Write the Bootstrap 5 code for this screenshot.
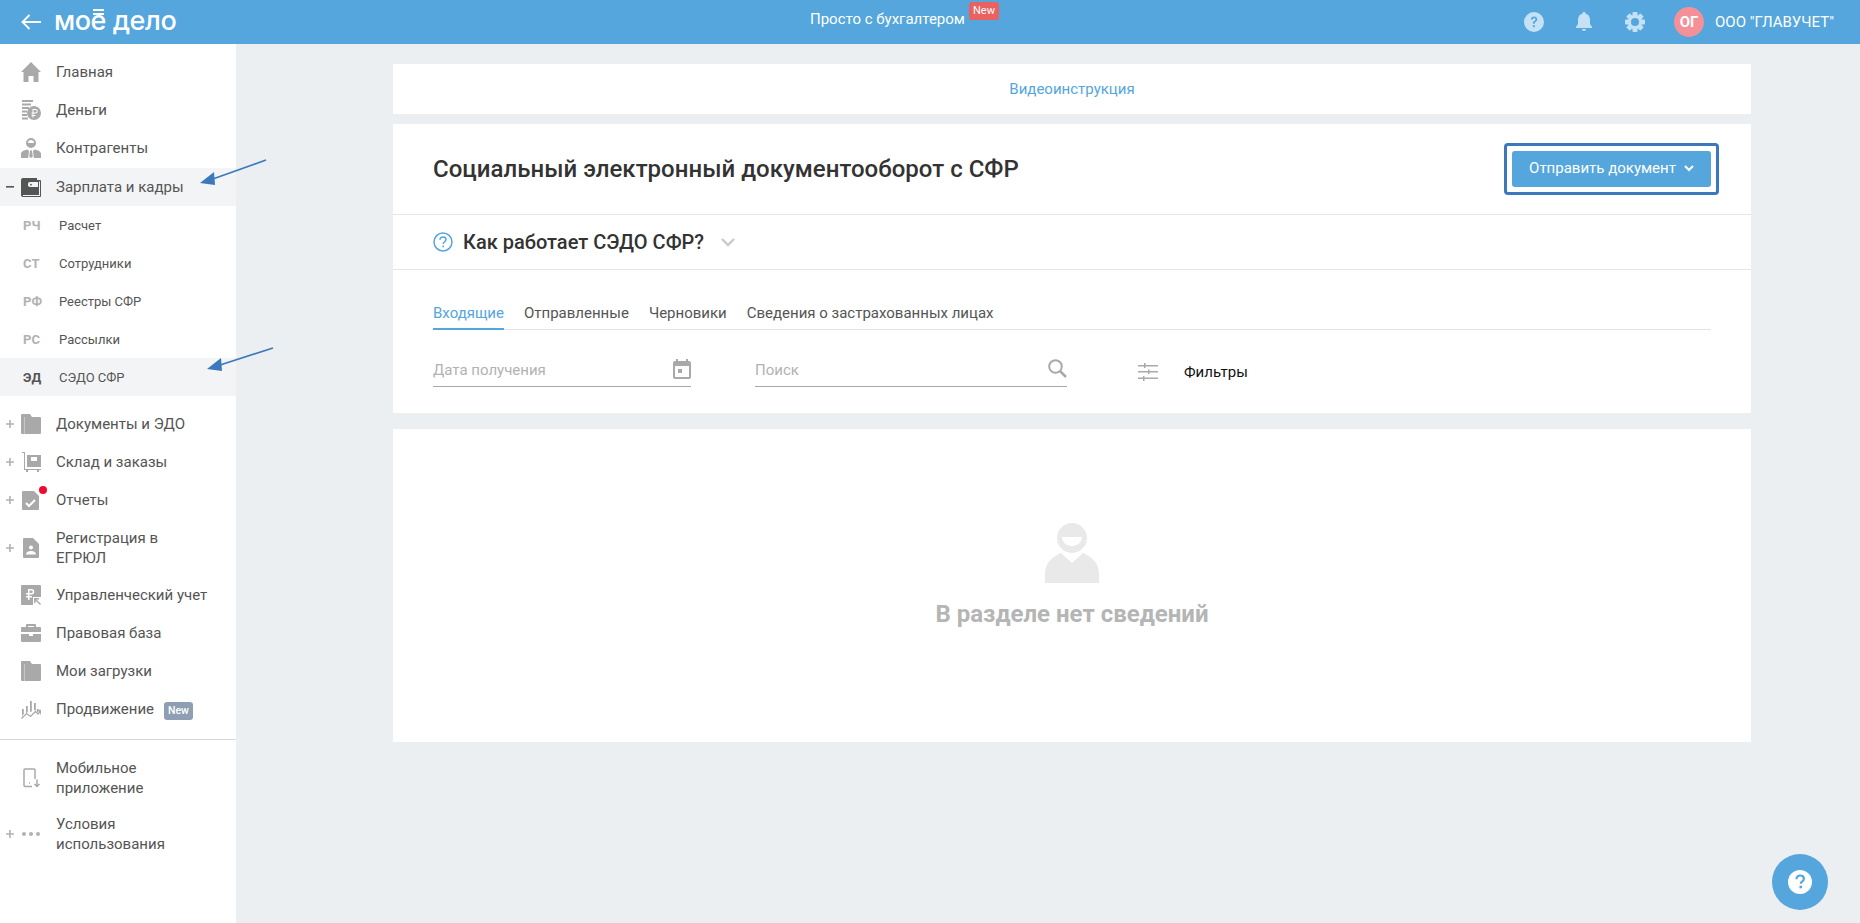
<!DOCTYPE html>
<html lang="ru">
<head>
<meta charset="utf-8">
<title>Моё дело</title>
<link href="https://cdn.jsdelivr.net/npm/bootstrap@5.3.0/dist/css/bootstrap.min.css" rel="stylesheet">
<style>
html,body{height:100%;overflow:hidden}
body{font-family:Roboto,"Liberation Sans",sans-serif;background:#ebeff2;color:#333;font-size:15px;position:relative}
.topbar{height:44px;background:#54a6dd;color:#fff}
.logo-word{font-family:Inter,Roboto,sans-serif;font-size:27px;font-weight:500;letter-spacing:-.45px;line-height:44px;margin-left:13px;position:relative;top:-1px}
.logo-e{position:relative}
.logo-e::before{content:"";position:absolute;left:2px;right:2px;top:5px;height:6px;border-top:2px solid #fff;border-bottom:2px solid #fff}
.back-ico{margin-left:21px}
.top-center{position:absolute;left:810px;top:0;height:44px;line-height:38px;font-size:15px}
.new-red{position:absolute;left:159px;top:2px;background:#ea6161;color:#fff;font-size:11px;line-height:18px;border-radius:3px;width:30px;text-align:center;height:18px}
.top-right{margin-left:auto}
.ico-slot{width:20px;height:20px;display:block}
.avatar-o{width:30px;height:30px;border-radius:50%;background:#f49097;color:#fff;font-weight:700;font-size:15px;display:flex;align-items:center;justify-content:center}
.company{font-size:15px;margin-left:11px;margin-right:26px}
.shell{height:879px}
.side-nav{width:236px;background:#fff;flex:none;padding-top:9px;font-size:15px;color:#555}
.mitem{min-height:38px;display:flex;align-items:center;padding-left:21px;line-height:20px;position:relative}
.mitem.pad-end{min-height:39px;padding-bottom:1px}
.mitem.active-row{background:#f3f4f5}
.mitem .ic{width:20px;height:20px;flex:none;margin-right:15px;display:block}
.mitem .tx{white-space:nowrap}
.mitem.two{min-height:57px}
.toggle{position:absolute;left:6px;top:50%;margin-top:-4px;width:8px;height:8px;display:block}
.sub-row{height:38px;display:flex;align-items:center;font-size:13px;color:#555;padding-top:1px}
.sub-row.active-row{background:#f3f4f5}
.abbr{width:59px;padding-left:23px;font-weight:700;font-size:13px;color:#b2b2b2;letter-spacing:.2px;flex:none}
.active-row .abbr{color:#555}
.sub-wrap{margin-bottom:9px}
.new-grey{background:#8e9fb4;color:#fff;font-size:10.5px;font-weight:500;border-radius:3px;line-height:18px;height:18px;padding:0 4px;margin-left:10px;display:inline-block}
.side-hr{border-top:1px solid #d9d9d9;margin:11px 0 0;opacity:1}
.lower{padding-top:10px}
.lower .mitem.two{min-height:56px}
.main-zone{flex:1;padding:20px 109px 0 157px;min-width:0}
.pane{background:#fff}
.video-box{height:50px;line-height:51px;text-align:center;color:#54a6dd;font-size:15px;margin-bottom:10px}
.main-box{height:289px;margin-bottom:16px}
.title-row{height:91px;padding:0 31px 0 40px;border-bottom:1px solid #e6e6e6}
.page-title{font-size:24px;font-weight:500;color:#333;margin:0;letter-spacing:.02px}
.btn-outline-frame{border:3px solid #3b78bc;border-radius:4px;padding:5px;background:#fff;margin-right:1px}
.btn-send{background:#54a6dd;color:#fff;border:0;border-radius:3px;height:36px;width:199px;font-size:15px;padding:0 0 2px;display:flex;align-items:center;justify-content:center;gap:8px}
.help-row{height:55px;padding-left:40px;border-bottom:1px solid #e6e6e6;font-size:20px;font-weight:500;color:#333}
.help-text{margin-left:10px}
.help-chev{margin-left:17px}
.tab-line{margin:30px 40px 0 40px;border-bottom:1px solid #e4e4e4;height:30px;gap:20px;font-size:15px;color:#555}
.tab-one{height:30px;line-height:27px}
.tab-on{color:#54a6dd;border-bottom:2px solid #54a6dd}
.filter-row{padding-left:40px;margin-top:25px;font-size:15px}
.fld{border-bottom:1px solid #a9a9a9;height:32px;color:#b2b2b2;display:flex;align-items:flex-start;justify-content:space-between;line-height:21px;padding-top:5px}
.fld svg{margin-top:-1px}
.fld-date{width:258px;margin-right:64px}
.fld-search{width:312px;margin-right:71px}
.filter-ico{margin-top:2px}
.filters-label{color:#111;font-size:15px;margin-left:26px;margin-top:2px}
.empty-box{height:313px;text-align:center;padding-top:94px}
.empty-txt{font-size:24px;font-weight:700;color:#b5b5b5;margin-top:16px;line-height:30px}
.fab-help{position:absolute;right:32px;bottom:13px;width:56px;height:56px;border-radius:50%;background:#54a6dd;display:flex;align-items:center;justify-content:center}
.arrow-mark{position:absolute;display:block}
</style>
</head>
<body>
<header class="topbar d-flex align-items-center position-relative">
  <svg class="back-ico" width="20" height="16" viewBox="0 0 20 16" fill="none" stroke="#fff" stroke-width="1.800"><path d="M20 8H1.500M8.500 1 1.500 8l7 7"/></svg>
  <span class="logo-word">мо<span class="logo-e">е</span> дело</span>
  <div class="top-center">Просто с бухгалтером<span class="new-red">New</span></div>
  <div class="top-right d-flex align-items-center">
    <svg class="ico-slot" style="margin-right:30px" viewBox="0 0 20 20"><circle cx="10" cy="10" r="10" fill="#c5e1f6"/><path d="M6.800 7.600C6.900 5.600 8.200 4.500 10.100 4.500c1.900 0 3.200 1.100 3.200 2.800 0 1.400-.8 2-1.700 2.700-.7.500-.9.900-.9 1.700H8.900c0-1.400.4-2 1.300-2.700.7-.6 1.200-.9 1.200-1.600 0-.7-.5-1.200-1.300-1.200-.9 0-1.400.6-1.400 1.400H6.800zM8.900 13.200h1.900v2H8.900z" fill="#54a6dd"/></svg>
    <svg class="ico-slot" style="margin-right:31px" viewBox="0 0 20 20" fill="#c5e1f6"><path d="M10 0c1 0 1.500.6 1.500 1.500C14.500 2.300 16 4.800 16 8v4l2 3v1H2v-1l2-3V8c0-3.200 1.500-5.700 4.500-6.500C8.500.6 9 0 10 0zM8 17h4c0 1.200-.9 2-2 2s-2-.8-2-2z"/></svg>
    <svg class="ico-slot" style="margin-right:29px" viewBox="0 0 20 20" fill="#c5e1f6"><rect x="7.500" y="0" width="5" height="20" rx=".8"/><rect x="7.500" y="0" width="5" height="20" rx=".8" transform="rotate(45 10 10)"/><rect x="7.500" y="0" width="5" height="20" rx=".8" transform="rotate(90 10 10)"/><rect x="7.500" y="0" width="5" height="20" rx=".8" transform="rotate(135 10 10)"/><circle cx="10" cy="10" r="5.500" fill="none" stroke="#c5e1f6" stroke-width="3"/><circle cx="10" cy="10" r="4" fill="#54a6dd"/></svg>
    <div class="avatar-o">ОГ</div>
    <span class="company">ООО "ГЛАВУЧЕТ"</span>
  </div>
</header>
<div class="shell d-flex">
  <nav class="side-nav">
    <div class="mitem"><svg class="ic" viewBox="0 0 20 20" fill="#a9a9a9"><path d="M10 0 20 10h-2.500v10h-5v-6h-5v6h-5V10H0z"/></svg><span class="tx">Главная</span></div>
    <div class="mitem"><svg class="ic" viewBox="0 0 20 20" fill="#a9a9a9"><path d="M1 0h11v2H1zM1 3.500h9v2H1zM1 7h7v2H1zM1 10.500h5v2H1zM1 14h5v2H1zM1 17.500h6v2H1z"/><circle cx="13" cy="13" r="7"/><path d="M11.500 9h3a2.200 2.200 0 0 1 0 4.500h-2V15H14.500v1h-2v1.500h-1V16h-1v-1h1v-1.500h-1v-1h1zm1 1v2.500h2a1.200 1.200 0 0 0 0-2.500z" fill="#fff"/></svg><span class="tx">Деньги</span></div>
    <div class="mitem pad-end"><svg class="ic" viewBox="0 0 20 20" fill="#a9a9a9"><path fill-rule="evenodd" d="M10 0a5 5 0 1 1 0 10 5 5 0 0 1 0-10zm0 2A3 3 0 0 0 7 5h6a3 3 0 0 0-3-3z"/><path d="M6.500 11.500 8 13l-.8 7H0v-4c0-2.500 3-3.700 6.500-4.500zM13.500 11.500 12 13l.8 7H20v-4c0-2.500-3-3.700-6.500-4.500zM9 12.500h2l.8 6-1.800 1.500-1.800-1.500z"/></svg><span class="tx">Контрагенты</span></div>
    <div class="mitem active-row"><svg class="toggle" viewBox="0 0 8 8" fill="#555"><path d="M0 3h8v1.600H0z"/></svg><svg class="ic" viewBox="0 0 20 20" fill="#555"><path fill-rule="evenodd" d="M2 1h13l1 0v2h3a1 1 0 0 1 1 1v15a1 1 0 0 1-1 1H2a2 2 0 0 1-2-2V3a2 2 0 0 1 2-2zm7 4a2 2 0 0 0-2 2v1a2 2 0 0 0 2 2h8V5zm1 1.800a.9.9 0 1 0 0 1.800.9.9 0 0 0 0-1.800zM18 4.500v13.500H2v1h17V4.500z"/></svg><span class="tx">Зарплата и кадры</span></div>
    <div class="sub-wrap">
      <div class="sub-row"><span class="abbr">РЧ</span>Расчет</div>
      <div class="sub-row"><span class="abbr">СТ</span>Сотрудники</div>
      <div class="sub-row"><span class="abbr">РФ</span>Реестры СФР</div>
      <div class="sub-row"><span class="abbr">РС</span>Рассылки</div>
      <div class="sub-row active-row"><span class="abbr">ЭД</span>СЭДО СФР</div>
    </div>
    <div class="mitem"><svg class="toggle" viewBox="0 0 8 8" fill="#b2b2b2"><path d="M3.200 0h1.600v3.200H8v1.600H4.800V8H3.200V4.800H0V3.200h3.200z"/></svg><svg class="ic" viewBox="0 0 20 20" fill="#a9a9a9"><path d="M1 0h8l2 3h8a1 1 0 0 1 1 1v15a1 1 0 0 1-1 1H1a1 1 0 0 1-1-1V1a1 1 0 0 1 1-1z"/><path d="M3 3h.7v17H3z" fill="#d5d5d5"/></svg><span class="tx">Документы и ЭДО</span></div>
    <div class="mitem"><svg class="toggle" viewBox="0 0 8 8" fill="#b2b2b2"><path d="M3.200 0h1.600v3.200H8v1.600H4.800V8H3.200V4.800H0V3.200h3.200z"/></svg><svg class="ic" viewBox="0 0 20 20" fill="#a9a9a9"><path d="M1 0h3v17h16v1h-2v2h-2v-2H7v2H5v-2H3V1H1z"/><path fill-rule="evenodd" d="M6 3h14v12H6zm4 2v4h6V5z"/></svg><span class="tx">Склад и заказы</span></div>
    <div class="mitem"><svg class="toggle" viewBox="0 0 8 8" fill="#b2b2b2"><path d="M3.200 0h1.600v3.200H8v1.600H4.800V8H3.200V4.800H0V3.200h3.200z"/></svg><svg class="ic" viewBox="0 0 20 20" fill="#a9a9a9"><path d="M2 1h11l5 5v13a1 1 0 0 1-1 1H2a1 1 0 0 1-1-1V2a1 1 0 0 1 1-1z"/><path d="m5 13 3 3 6-6" fill="none" stroke="#fff" stroke-width="2"/></svg><svg class="arrow-mark" style="left:39px;top:5px" width="8" height="8" viewBox="0 0 8 8"><circle cx="4" cy="4" r="4" fill="#ee0b2e"/></svg><span class="tx">Отчеты</span></div>
    <div class="mitem two"><svg class="toggle" viewBox="0 0 8 8" fill="#b2b2b2"><path d="M3.200 0h1.600v3.200H8v1.600H4.800V8H3.200V4.800H0V3.200h3.200z"/></svg><svg class="ic" viewBox="0 0 20 20" fill="#a9a9a9"><path d="M3 0h9l6 6v13a1 1 0 0 1-1 1H3a1 1 0 0 1-1-1V1a1 1 0 0 1 1-1z"/><circle cx="10" cy="9.500" r="2" fill="#fff"/><path d="M5 16.500c0-2.500 2.500-3.500 5-3.500s5 1 5 3.500z" fill="#fff"/></svg><span class="tx">Регистрация в<br>ЕГРЮЛ</span></div>
    <div class="mitem"><svg class="ic" viewBox="0 0 20 20" fill="#a9a9a9"><path d="M1 0h18a1 1 0 0 1 1 1v11h-8v8H1a1 1 0 0 1-1-1V1a1 1 0 0 1 1-1z"/><path d="M7 4h3.500a2.700 2.700 0 0 1 0 5.500H8.500V11H11v1.500H8.500V15H7v-2.500H5V11h2V9.500H5V8h2zm1.500 1.500V8h2a1.200 1.200 0 0 0 0-2.500z" fill="#fff"/><path d="M13 13h5v1.500h-2.500L20 19l-1 1-4.500-4.500V18H13z"/></svg><span class="tx">Управленческий учет</span></div>
    <div class="mitem"><svg class="ic" viewBox="0 0 20 20" fill="#a9a9a9"><path d="M6 1h8a1 1 0 0 1 1 1v2h4a1 1 0 0 1 1 1v4H0V5a1 1 0 0 1 1-1h4V2a1 1 0 0 1 1-1zm1 2v1h6V3zM0 11h8v2h4v-2h8v7a1 1 0 0 1-1 1H1a1 1 0 0 1-1-1z"/></svg><span class="tx">Правовая база</span></div>
    <div class="mitem"><svg class="ic" viewBox="0 0 20 20" fill="#a9a9a9"><path d="M1 0h8l2 3h8a1 1 0 0 1 1 1v15a1 1 0 0 1-1 1H1a1 1 0 0 1-1-1V1a1 1 0 0 1 1-1z"/><path d="M3 3h.7v17H3z" fill="#d5d5d5"/></svg><span class="tx">Мои загрузки</span></div>
    <div class="mitem"><svg class="ic" viewBox="0 0 20 20" fill="#a9a9a9"><path d="M1 10h1.800v5L1 17zM5 7h1.800v6L5 14.500zM9 2h1.800v10.500L9 13zM13 4h1.800v7.500L13 11zM16 10h1.500v2.500L16 13z"/><path d="m.5 19.500 5-5 4 3 5-5 2.500 2.500L19.500 12M15.800 11.500h4v4" fill="none" stroke="#a9a9a9" stroke-width="1.300"/></svg><span class="text-nowrap">Продвижение<span class="new-grey">New</span></span></div>
    <hr class="side-hr">
    <div class="lower">
      <div class="mitem two"><svg class="ic" viewBox="0 0 20 20" fill="none" stroke="#a9a9a9" stroke-width="1.500"><path d="M11 18.500H4a1 1 0 0 1-1-1V2a1 1 0 0 1 1-1h9a1 1 0 0 1 1 1v9"/><path d="M16 11.500v7M13.500 16l2.500 2.500 2.500-2.500M8 15h1"/></svg><span class="tx">Мобильное<br>приложение</span></div>
      <div class="mitem two"><svg class="toggle" viewBox="0 0 8 8" fill="#b2b2b2"><path d="M3.200 0h1.600v3.200H8v1.600H4.800V8H3.200V4.800H0V3.200h3.200z"/></svg><svg class="ic" viewBox="0 0 20 20" fill="#b2b2b2"><circle cx="3" cy="10" r="2"/><circle cx="10" cy="10" r="2"/><circle cx="17" cy="10" r="2"/></svg><span class="tx">Условия<br>использования</span></div>
    </div>
  </nav>
  <main class="main-zone">
    <div class="pane video-box">Видеоинструкция</div>
    <section class="pane main-box">
      <div class="title-row d-flex align-items-center justify-content-between">
        <h1 class="page-title">Социальный электронный документооборот с СФР</h1>
        <div class="btn-outline-frame"><button type="button" class="btn-send">Отправить документ <svg width="10" height="7" viewBox="0 0 10 7" fill="none" stroke="#fff" stroke-width="2"><path d="m1 1 4 4 4-4"/></svg></button></div>
      </div>
      <div class="help-row d-flex align-items-center">
        <svg width="20" height="20" viewBox="0 0 20 20" fill="none"><circle cx="10" cy="10" r="9" stroke="#54a6dd" stroke-width="1.500"/><path d="M7 7.800C7 6 8.300 5 10 5s3 1 3 2.600c0 1.300-.8 1.800-1.600 2.400-.7.500-1.200 1-1.200 2" stroke="#54a6dd" stroke-width="1.500"/><path d="M9.400 13.500h1.600v1.700H9.400z" fill="#54a6dd"/></svg>
        <span class="help-text">Как работает СЭДО СФР?</span>
        <svg class="help-chev" width="14" height="9" viewBox="0 0 14 9" fill="none" stroke="#c9c9c9" stroke-width="2.400"><path d="m1 1 6 6 6-6"/></svg>
      </div>
      <div class="tab-line d-flex">
        <span class="tab-one tab-on">Входящие</span>
        <span class="tab-one">Отправленные</span>
        <span class="tab-one">Черновики</span>
        <span class="tab-one">Сведения о застрахованных лицах</span>
      </div>
      <div class="filter-row d-flex align-items-center">
        <div class="fld fld-date">Дата получения<svg width="18" height="20" viewBox="0 0 18 20" fill="#a9a9a9"><path fill-rule="evenodd" d="M3 0h2v2h8V0h2v2h1a2 2 0 0 1 2 2v14a2 2 0 0 1-2 2H2a2 2 0 0 1-2-2V4a2 2 0 0 1 2-2h1zM2 7v11h14V7zm3 3h4v4H5z"/></svg></div>
        <div class="fld fld-search">Поиск<svg width="19" height="19" viewBox="0 0 19 19" fill="none" stroke="#a9a9a9"><circle cx="7.500" cy="7.500" r="6.300" stroke-width="2"/><path d="m12 12 6 6" stroke-width="2.500"/></svg></div>
        <svg class="filter-ico" width="20" height="18" viewBox="0 0 20 18" fill="#a9a9a9"><path d="M0 2h6V0h1.500v2H20v1.500H7.500V5H6V3.500H0zM0 8h10V6.500h1.500V8H20v1.500h-8.500V11H10V9.500H0zM0 14.500h5V13h1.500v1.500H20V16H6.500v2H5v-2H0z"/></svg>
        <span class="filters-label">Фильтры</span>
      </div>
    </section>
    <section class="pane empty-box">
      <svg width="54" height="60" viewBox="0 0 54 60" fill="#e9e9e9"><path fill-rule="evenodd" d="M27 0a15 15 0 1 1 0 30A15 15 0 0 1 27 0zM17 14c0 5 4.500 9 10 9s10-4 10-9z"/><path d="M16 30l11 10 11-10c9 4 16 10 16 21v9H0v-9c0-11 7-17 16-21z"/></svg>
      <div class="empty-txt">В разделе нет сведений</div>
    </section>
  </main>
</div>
<svg class="arrow-mark" style="left:198px;top:158px" width="70" height="30" viewBox="0 0 70 30"><path d="M68 2 12 22" stroke="#3b78bc" stroke-width="1.600"/><path d="M2 25 16 14l1 13z" fill="#3b78bc"/></svg>
<svg class="arrow-mark" style="left:205px;top:346px" width="70" height="30" viewBox="0 0 70 30"><path d="M68 2 12 20" stroke="#3b78bc" stroke-width="1.600"/><path d="M2 23 16 12l1 13z" fill="#3b78bc"/></svg>
<div class="fab-help"><svg width="24" height="24" viewBox="0 0 24 24"><circle cx="12" cy="12" r="12" fill="#fff"/><path d="M8.500 9.300C8.500 6.900 10 5.500 12.200 5.500c2.200 0 3.700 1.300 3.700 3.200 0 1.700-1 2.300-2 3-.8.600-1 1-1 2.100" fill="none" stroke="#54a6dd" stroke-width="2.200"/><path d="M11.500 15.700h2.500v2.600h-2.500z" fill="#54a6dd"/></svg></div>
</body>
</html>
